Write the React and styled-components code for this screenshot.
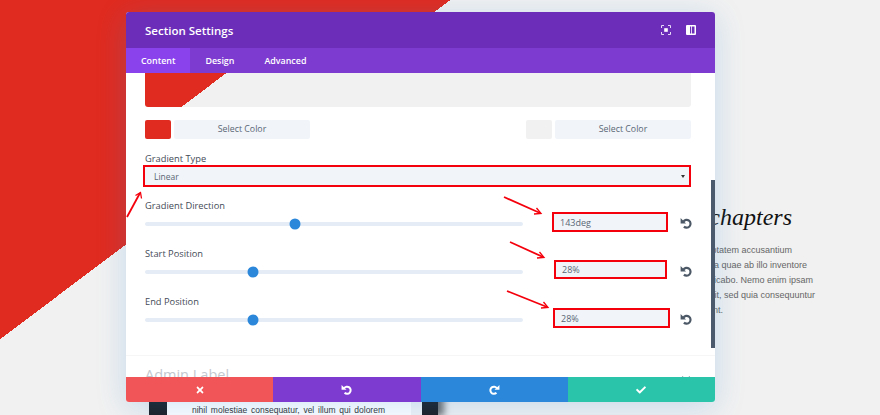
import React from 'react'
import styled, { createGlobalStyle } from 'styled-components'
import { FaTimes, FaCheck, FaChevronDown } from 'react-icons/fa'

const GlobalStyle = createGlobalStyle`
  html, body {
    margin: 0;
    padding: 0;
    background: #f1f1f1;
  }
`

const Page = styled.div`
  position: relative;
  width: 880px;
  height: 415px;
  overflow: hidden;
  display: flex;
  padding-left: 149px;
  box-sizing: border-box;
  background: linear-gradient(143deg, #e02b20 271px, #f1f1f1 271px);
`

const Device = styled.div`
  align-self: flex-end;
  flex: none;
  width: 289px;
  height: 60px;
  margin-bottom: -1px;
  padding: 0 16px 0 18px;
  box-sizing: border-box;
  display: flex;
  background: #1c1f24;
  box-shadow: 6px 0 7px rgba(0, 0, 0, 0.55);
`

const DeviceCard = styled.div`
  flex: 1;
  display: flex;
  align-items: flex-end;
  padding: 0 37px 0 25px;
  background: linear-gradient(90deg, #fff 244px, #f1f3f5 244px);
`

const DeviceText = styled.p`
  margin: 0;
  width: 100%;
  font: 8.5px/12px "Liberation Sans", Arial, sans-serif;
  color: #333;
  text-align: justify;
  text-align-last: justify;
`

const Story = styled.div`
  flex: none;
  width: 140px;
  margin-left: 242px;
  padding-top: 202px;
`

const StoryTitle = styled.h2`
  margin: 0 0 11px;
  height: 30px;
  padding-right: 28px;
  font: italic 400 24px/30px "Liberation Serif", "DejaVu Serif", serif;
  color: #111;
  text-align: right;
`

const StoryLine = styled.div`
  padding-right: ${(p) => p.$inset}px;
  font: 9px/15px "Liberation Sans", Arial, sans-serif;
  color: #666;
  text-align: right;
  white-space: nowrap;
`

const Modal = styled.div`
  position: absolute;
  left: 126px;
  top: 12px;
  width: 589px;
  height: 390px;
  display: flex;
  flex-direction: column;
  border-radius: 3px;
  overflow: hidden;
  background: #fff;
  box-shadow: 0 5px 30px rgba(43, 135, 218, 0.22);
  font-family: "Open Sans", "Noto Sans", sans-serif;
`

const Header = styled.div`
  flex: none;
  height: 36px;
  display: flex;
  align-items: center;
  padding: 0 19px;
  background: #6c2eb9;
`

const Title = styled.div`
  flex: 1;
  font-size: 11.5px;
  font-weight: 600;
  color: #fff;
`

const HeaderIcon = styled.svg`
  display: block;
  width: 10px;
  height: 10px;
  margin-left: ${(p) => p.$gap || 0}px;
  fill: none;
`

const Tabs = styled.div`
  flex: none;
  height: 25px;
  display: flex;
  background: #7e3bd0;
`

const Tab = styled.div`
  display: flex;
  align-items: center;
  padding: 0 15px;
  font-size: 8.9px;
  font-weight: 600;
  color: #fff;
  background: ${(p) => (p.$active ? '#8a42ec' : 'transparent')};
`

const Body = styled.div`
  position: relative;
  flex: 1;
  min-height: 0;
  overflow: hidden;
  padding: 0 24px 0 19px;
`

const Preview = styled.div`
  height: 34px;
  border-radius: 0 0 3px 3px;
  background: linear-gradient(143deg, #e02b20 49px, #f1f1f1 49px);
`

const ColorRow = styled.div`
  display: flex;
  justify-content: space-between;
  margin-top: 13px;
`

const ColorPicker = styled.div`
  display: flex;
  gap: 3px;
`

const Swatch = styled.div`
  width: 26px;
  height: 19px;
  border-radius: 2px;
  background: ${(p) => p.$color};
`

const SelectColor = styled.div`
  width: 136px;
  height: 18px;
  padding-bottom: 1px;
  display: flex;
  align-items: center;
  justify-content: center;
  border-radius: 2px;
  font-size: 8.8px;
  font-weight: 500;
  color: #5a6675;
  background: #f1f5f9;
`

const Label = styled.div`
  height: 14px;
  font-size: 9.3px;
  line-height: 15px;
  font-weight: 500;
  color: #444b57;
`

const TypeLabel = styled(Label)`
  margin-top: 12px;
`

const Select = styled.div`
  height: 22px;
  margin-left: -2px;
  padding: 0 4px 0 9px;
  box-sizing: border-box;
  display: flex;
  align-items: center;
  justify-content: space-between;
  border: 2px solid #f4000c;
  font-size: 8.5px;
  color: #5a6675;
  background: #f1f5f9;
`

const Caret = styled.span`
  width: 0;
  height: 0;
  border-left: 2px solid transparent;
  border-right: 2px solid transparent;
  border-top: 3px solid #333;
`

const SliderRows = styled.div`
  margin-top: 11px;
`

const Row = styled.div`
  height: 48px;
  display: flex;
  align-items: flex-start;
`

const SliderCol = styled.div`
  flex: none;
  width: 378px;
`

const SliderArea = styled.div`
  position: relative;
  height: 20px;
  margin-top: 2px;
  display: flex;
  align-items: center;
`

const Track = styled.div`
  width: 100%;
  height: 4px;
  border-radius: 2px;
  background: #e6ecf5;
`

const Thumb = styled.div`
  position: absolute;
  top: 50%;
  width: 11px;
  height: 11px;
  border-radius: 50%;
  background: #2b87da;
  transform: translate(-50%, -50%);
`

const ValueBox = styled.div`
  flex: none;
  width: ${(p) => p.$width}px;
  height: ${(p) => p.$height}px;
  margin: 14px 0 0 ${(p) => p.$offset}px;
  padding-left: 6px;
  box-sizing: border-box;
  display: flex;
  align-items: center;
  border: 2px solid #f4000c;
  font-size: 9px;
  color: #5a6675;
  background: #f1f5f9;
`

const Reset = styled.div`
  display: flex;
  margin: 19px -1px 0 auto;
  color: #4c5866;
`

const Toggle = styled.div`
  display: flex;
  justify-content: space-between;
  margin: 13px -24px 0 -19px;
  padding: 9px 24px 0 19px;
  border-top: 1px solid #f6f6f6;
`

const ToggleTitle = styled.div`
  font-size: 14.5px;
  line-height: 20px;
  color: #c3c8cf;
`

const ToggleIcon = styled.div`
  display: flex;
  margin-top: 9px;
  font-size: 10px;
  color: #4c5866;
`

const Scrollbar = styled.div`
  position: absolute;
  right: 0;
  top: 107px;
  width: 4px;
  height: 168px;
  background: #4c5a6d;
`

const Footer = styled.div`
  flex: none;
  height: 25px;
  display: flex;
`

const FooterButton = styled.div`
  flex: 1;
  display: flex;
  align-items: center;
  justify-content: center;
  font-size: 10px;
  color: #fff;
  background: ${(p) => p.$color};
`

const Annotations = styled.svg`
  position: absolute;
  left: 0;
  top: 0;
  pointer-events: none;
`

const TurnSvg = styled.svg`
  display: block;
  transform: ${(p) => (p.$mirror ? 'scaleX(-1)' : 'none')};
`

// thick ring with a solid arrow head, the builder's undo/redo glyph
const TurnIcon = ({ size = 12, mirror }) => (
  <TurnSvg width={size} height={size} viewBox="0 0 12 12" $mirror={mirror}>
    <path d="M3.4 4.6A3.9 3.9 0 1 1 3.9 9.6" fill="none" stroke="currentColor" strokeWidth="2.2" />
    <polygon points="0.6,1 0.6,6.4 6,6.4" fill="currentColor" />
  </TurnSvg>
)

const arrows = [
  { from: [127, 217], to: [140, 193], head: 'M135.5 195.5 L140.5 192.5 L141.5 198.5' },
  { from: [504, 197], to: [540, 213], head: 'M534 214 L541 213.5 L536.5 208' },
  { from: [510, 242], to: [543, 257], head: 'M537 258 L544 257.5 L539.5 252' },
  { from: [507, 291], to: [547, 307], head: 'M541 308 L548 307.5 L543.5 302' },
]

const sliders = [
  { label: 'Gradient Direction', value: 39.7, text: '143deg', offset: 29, width: 116, height: 20 },
  { label: 'Start Position', value: 28.6, text: '28%', offset: 31, width: 113, height: 19 },
  { label: 'End Position', value: 28.6, text: '28%', offset: 30, width: 117, height: 20 },
]

const storyLines = [
  { text: 'voluptatem accusantium', inset: 28 },
  { text: 'ipsa quae ab illo inventore', inset: 13 },
  { text: 'explicabo. Nemo enim ipsam', inset: 7 },
  { text: 'fugit, sed quia consequuntur', inset: 5 },
  { text: 'nesciunt.', inset: 97 },
]

export default function App() {
  return (
    <Page>
      <GlobalStyle />
      <Device>
        <DeviceCard>
          <DeviceText>nihil molestiae consequatur, vel illum qui dolorem</DeviceText>
        </DeviceCard>
      </Device>
      <Story>
        <StoryTitle>chapters</StoryTitle>
        {storyLines.map((l) => (
          <StoryLine key={l.text} $inset={l.inset}>{l.text}</StoryLine>
        ))}
      </Story>

      <Modal>
        <Header>
          <Title>Section Settings</Title>
          <HeaderIcon viewBox="0 0 10 10">
            <path d="M0.5 3V0.5H3M7 0.5H9.5V3M9.5 7V9.5H7M3 9.5H0.5V7" stroke="#e6d8f7" strokeWidth="1" />
            <rect x="3.2" y="3.2" width="3.6" height="3.6" fill="#fff" />
          </HeaderIcon>
          <HeaderIcon viewBox="0 0 10 10" $gap={15}>
            <rect width="10" height="10" rx="1" fill="#fff" />
            <rect x="4" y="1.5" width="1.2" height="7" fill="#6c2eb9" />
            <rect x="6" y="1.5" width="2.5" height="7" fill="#6c2eb9" />
          </HeaderIcon>
        </Header>
        <Tabs>
          <Tab $active>Content</Tab>
          <Tab>Design</Tab>
          <Tab>Advanced</Tab>
        </Tabs>
        <Body>
          <Preview />
          <ColorRow>
            <ColorPicker>
              <Swatch $color="#e02b20" />
              <SelectColor>Select Color</SelectColor>
            </ColorPicker>
            <ColorPicker>
              <Swatch $color="#f1f1f1" />
              <SelectColor>Select Color</SelectColor>
            </ColorPicker>
          </ColorRow>
          <TypeLabel>Gradient Type</TypeLabel>
          <Select>
            Linear
            <Caret />
          </Select>
          <SliderRows>
            {sliders.map((s) => (
              <Row key={s.label}>
                <SliderCol>
                  <Label>{s.label}</Label>
                  <SliderArea>
                    <Track />
                    <Thumb style={{ left: `${s.value}%` }} />
                  </SliderArea>
                </SliderCol>
                <ValueBox $offset={s.offset} $width={s.width} $height={s.height}>
                  {s.text}
                </ValueBox>
                <Reset>
                  <TurnIcon />
                </Reset>
              </Row>
            ))}
          </SliderRows>
          <Toggle>
            <ToggleTitle>Admin Label</ToggleTitle>
            <ToggleIcon>
              <FaChevronDown />
            </ToggleIcon>
          </Toggle>
          <Scrollbar />
        </Body>
        <Footer>
          <FooterButton $color="#f25557"><FaTimes /></FooterButton>
          <FooterButton $color="#7e3bd0"><TurnIcon size={11} /></FooterButton>
          <FooterButton $color="#2b87da"><TurnIcon size={11} mirror /></FooterButton>
          <FooterButton $color="#29c4a9"><FaCheck /></FooterButton>
        </Footer>
      </Modal>

      <Annotations width="880" height="415" viewBox="0 0 880 415" fill="none" stroke="#f4000c" strokeWidth="1.8">
        {arrows.map((a) => (
          <g key={a.head}>
            <line x1={a.from[0]} y1={a.from[1]} x2={a.to[0]} y2={a.to[1]} />
            <path d={a.head} strokeWidth="1.3" />
          </g>
        ))}
      </Annotations>
    </Page>
  )
}
